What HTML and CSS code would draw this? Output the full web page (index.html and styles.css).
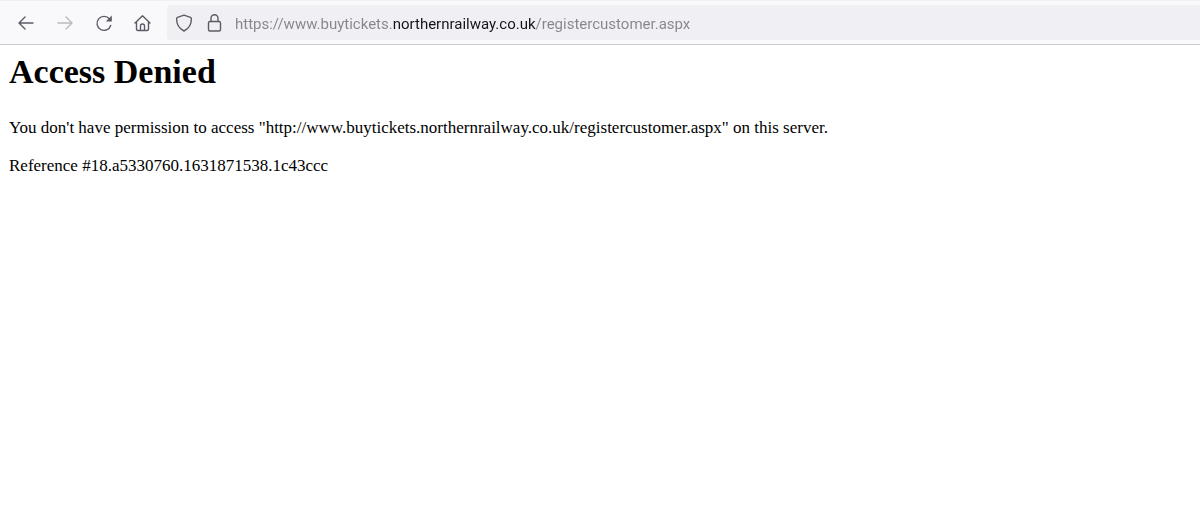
FILE: index.html
```
<!DOCTYPE html>
<html lang="en">
<head>
  <meta charset="UTF-8" />
  <meta name="viewport" content="width=device-width, initial-scale=1.0"/>
  <title>Access Denied</title>
  <link rel="stylesheet" href="styles.css">
</head>
<body>
  <header class="toolbar">
    <nav class="nav-buttons">
      <button type="button" aria-label="Back">
        <svg viewBox="0 0 18 18"><path d="M16 9H2M8 3L2 9l6 6"/></svg>
      </button>
      <button type="button" aria-label="Forward" disabled>
        <svg viewBox="0 0 18 18"><path d="M2 9h14M10 3l6 6-6 6"/></svg>
      </button>
      <button type="button" aria-label="Reload">
        <svg viewBox="0 0 18 18"><path d="M15.700 11.500A7 7 0 1 1 14.500 5"/><path class="filled" d="M16.800 1.500v6H10.800z"/></svg>
      </button>
      <button type="button" aria-label="Home">
        <svg viewBox="0 0 18 18"><path d="M1 9L8.500 1.700 16 9M2.500 7.800V15q0 1.500 1.500 1.500h9q1.500 0 1.500-1.500V7.800M6.500 16.500V12q0-2 2-2t2 2v4.500"/></svg>
      </button>
    </nav>
    <div class="url-bar">
      <svg viewBox="0 0 18 18"><path d="M9 1.200L15.500 3.300q.900.300.900 1.400C16.400 10 14 14.500 9 17 4 14.500 1.600 10 1.600 4.700q0-1.100.900-1.400z"/></svg>
      <svg viewBox="0 0 18 18"><rect x="3.500" y="7.500" width="12" height="9.500" rx="1.500"/><path d="M6 7.500V4.300a3.500 3.500 0 0 1 7 0v3.200"/></svg>
      <input class="url" type="text" aria-label="Address" spellcheck="false" value="https://www.buytickets.northernrailway.co.uk/registercustomer.aspx">
    </div>
  </header>

  <main class="content">
    <h1>Access Denied</h1>
    <p>You don't have permission to access "http://www.buytickets.northernrailway.co.uk/registercustomer.aspx" on this server.</p>
    <p>Reference #18.a5330760.1631871538.1c43ccc</p>
  </main>
</body>
</html>
```

FILE: styles.css
```
body {
  margin: 0;
  background: #fff;
  color: #000;
  font-family: "Liberation Serif", "Times New Roman", serif;
  font-size: 17px;
  line-height: 20px;
}

.toolbar {
  display: flex;
  align-items: center;
  gap: 5px;
  padding: 4px 0 4px 7px;
  background: #f9f9fb;
  border-top: 1px solid #f0f0f4;
  border-bottom: 1px solid #cccccf;
}

.nav-buttons {
  display: flex;
  gap: 1px;
}

.nav-buttons button {
  display: flex;
  align-items: center;
  justify-content: center;
  width: 38px;
  height: 35px;
  padding: 0;
  border: none;
  background: none;
}

.nav-buttons button:disabled {
  opacity: 0.4;
}

.toolbar svg {
  flex: none;
  width: 18px;
  height: 18px;
  fill: none;
  stroke: #5b5b66;
  stroke-width: 1.4;
  stroke-linecap: round;
  stroke-linejoin: round;
}

.toolbar .filled {
  fill: #5b5b66;
  stroke: none;
}

.url-bar {
  flex: 1;
  display: flex;
  align-items: center;
  gap: 12px;
  height: 35px;
  padding-left: 8px;
  background: #f0f0f4;
  border-radius: 4px 0 0 4px;
}

/* the domain is darker than the rest of the address */
.url {
  flex: 1;
  min-width: 0;
  padding: 2px 0 0;
  border: none;
  outline: none;
  background: linear-gradient(to right, #85858b 158px, #15141a 158px, #15141a 301px, #85858b 301px);
  -webkit-background-clip: text;
  background-clip: text;
  color: transparent;
  font-family: Roboto, "Liberation Sans", sans-serif;
  font-size: 15px;
  line-height: 20px;
}

.content {
  padding: 7px 9px;
}

h1 {
  margin: 0 0 26px;
  font-size: 34px;
  line-height: 40px;
}

p {
  margin: 0 0 18px;
}
```
